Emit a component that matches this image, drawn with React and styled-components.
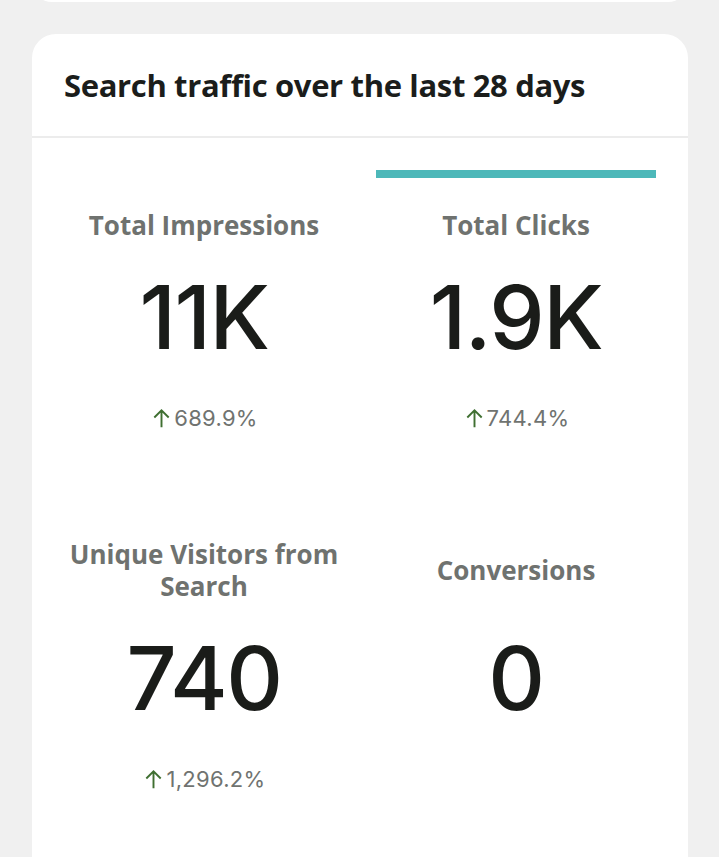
import React from 'react';
import styled, { createGlobalStyle } from 'styled-components';

const GlobalStyle = createGlobalStyle`
    body {
        margin: 0;
        background: #f0f0f0;
        font-family: "Open Sans", "Liberation Sans", sans-serif;
    }
`;

const Page = styled.div`
    padding: 0 31px 0 32px;
`;

// bottom edge of the card above, scrolled mostly out of view
const PrevCard = styled.div`
    height: 40px;
    margin-top: -38px;
    background: #fff;
    border-radius: 24px;
`;

const Card = styled.section`
    margin-top: 32px;
    background: #fff;
    border-radius: 24px 24px 0 0;
    min-height: 830px;
`;

const Header = styled.header`
    height: 102px;
    display: flex;
    align-items: center;
    padding: 0 32px;
    border-bottom: 2px solid #ececec;
`;

const Title = styled.h2`
    margin: 0;
    font-size: 31px;
    font-weight: 700;
    color: #1b1d1b;
    letter-spacing: -0.35px;
`;

const Grid = styled.div`
    display: grid;
    grid-template-columns: 280px 280px;
    column-gap: 32px;
    row-gap: 67px;
    padding: 32px 32px 0;
`;

const Tile = styled.div`
    display: flex;
    flex-direction: column;
    align-items: center;
    text-align: center;
    border-top: 8px solid ${p => (p.$active ? '#4db8b9' : 'transparent')};
    padding-top: 31px;
`;

const Label = styled.div`
    min-height: ${p => (p.$tall ? 64 : 32)}px;
    display: flex;
    align-items: center;
    justify-content: center;
    font-size: 26px;
    line-height: 32px;
    font-weight: 700;
    color: #6f726f;
`;

const Value = styled.div`
    margin-top: 26px;
    font-family: Inter, "Open Sans", sans-serif;
    font-size: 88px;
    line-height: 100px;
    font-weight: 500;
    color: #1a1c19;
    letter-spacing: -1.5px;
`;

const Change = styled.div`
    margin-top: 37px;
    height: 28px;
    display: flex;
    align-items: center;
    gap: 1px;
    font-family: Inter, "Open Sans", sans-serif;
    font-size: 22px;
    color: #707370;
    letter-spacing: 0.3px;
`;

const UpArrow = () => (
    <svg width="23" height="23" viewBox="0 0 24 24" fill="none" stroke="#3f6f31" strokeWidth="2">
        <path d="M12 21V3.5M4.5 11l7.5-7.5 7.5 7.5" />
    </svg>
);

const metrics = [
    { label: 'Total Impressions', value: '11K', change: '689.9%' },
    { label: 'Total Clicks', value: '1.9K', change: '744.4%', active: true },
    { label: 'Unique Visitors from Search', value: '740', change: '1,296.2%', tall: true },
    { label: 'Conversions', value: '0', tall: true },
];

export default function App() {
    return (
        <Page>
            <GlobalStyle />
            <PrevCard />
            <Card>
                <Header>
                    <Title>Search traffic over the last 28 days</Title>
                </Header>
                <Grid>
                    {metrics.map(m => (
                        <Tile key={m.label} $active={m.active}>
                            <Label $tall={m.tall}>{m.label}</Label>
                            <Value>{m.value}</Value>
                            {m.change && (
                                <Change>
                                    <UpArrow />
                                    {m.change}
                                </Change>
                            )}
                        </Tile>
                    ))}
                </Grid>
            </Card>
        </Page>
    );
}
